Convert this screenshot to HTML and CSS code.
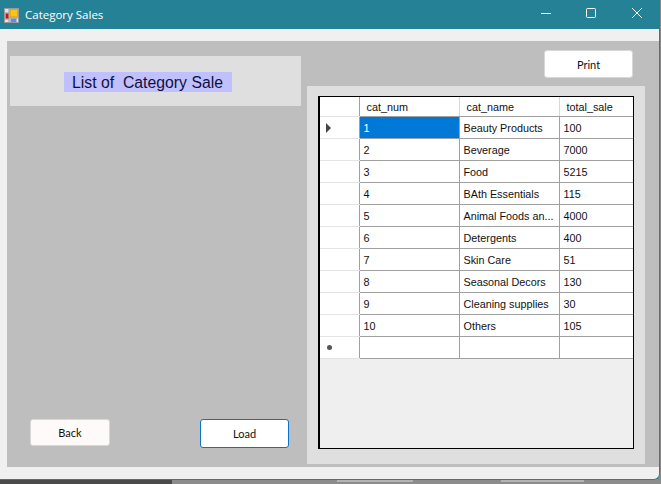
FILE: index.html
```html
<!DOCTYPE html>
<html lang="en">
<head>
    <meta charset="UTF-8">
    <title>Category Sales</title>
    <link rel="stylesheet" href="styles.css">
</head>
<body>
    <div class="window">
        <div class="titlebar">
            <svg class="app-icon" width="15" height="15" viewBox="0 0 15 15">
                <rect x="0.5" y="0.5" width="14" height="14" fill="#e4e4e4" stroke="#9a9a9a"/>
                <path d="M5 0v15M0 5h5M0 11h5M5 10h10" stroke="#9a9a9a" fill="none"/>
                <rect x="6" y="1.5" width="7.5" height="7.5" fill="#f5c518" stroke="#b98a10" stroke-width="0.6"/>
                <rect x="1.5" y="5.5" width="3" height="5" fill="#c01818"/>
                <rect x="6.5" y="10.5" width="6" height="3.5" fill="#5c8ee6"/>
            </svg>
            <span class="title">Category Sales</span>
            <div class="controls">
                <svg class="ctl" width="46" height="29" viewBox="0 0 46 29"><path d="M20 13.5h10" stroke="#fff" fill="none"/></svg>
                <svg class="ctl" width="46" height="29" viewBox="0 0 46 29"><rect x="19.5" y="8.5" width="9" height="9" rx="1" stroke="#fff" fill="none"/></svg>
                <svg class="ctl" width="46" height="29" viewBox="0 0 46 29"><path d="M19 8l10 10M29 8l-10 10" stroke="#fff" fill="none"/></svg>
            </div>
        </div>
        <div class="form-body">
            <div class="main-panel">
                <div class="left-col">
                    <div class="heading-box"><span class="heading">List of&nbsp; Category Sale</span></div>
                    <div class="left-buttons">
                        <button class="btn btn-back">Back</button>
                        <button class="btn btn-load">Load</button>
                    </div>
                </div>
                <div class="right-col">
                    <div class="print-row"><button class="btn btn-print">Print</button></div>
                    <div class="grid-panel">
                        <div class="grid-view">
                            <table class="data-grid">
                                <thead>
                                    <tr>
                                        <th class="row-head"></th>
                                        <th class="col-num">cat_num</th>
                                        <th class="col-name">cat_name</th>
                                        <th class="col-total">total_sale</th>
                                    </tr>
                                </thead>
                                <tbody>
                                    <tr><td class="row-head"><span class="arrow"></span></td><td class="selected">1</td><td>Beauty Products</td><td>100</td></tr>
                                    <tr><td class="row-head"></td><td>2</td><td>Beverage</td><td>7000</td></tr>
                                    <tr><td class="row-head"></td><td>3</td><td>Food</td><td>5215</td></tr>
                                    <tr><td class="row-head"></td><td>4</td><td>BAth Essentials</td><td>115</td></tr>
                                    <tr><td class="row-head"></td><td>5</td><td>Animal Foods an...</td><td>4000</td></tr>
                                    <tr><td class="row-head"></td><td>6</td><td>Detergents</td><td>400</td></tr>
                                    <tr><td class="row-head"></td><td>7</td><td>Skin Care</td><td>51</td></tr>
                                    <tr><td class="row-head"></td><td>8</td><td>Seasonal Decors</td><td>130</td></tr>
                                    <tr><td class="row-head"></td><td>9</td><td>Cleaning supplies</td><td>30</td></tr>
                                    <tr><td class="row-head"></td><td>10</td><td>Others</td><td>105</td></tr>
                                    <tr><td class="row-head"><span class="star"></span></td><td></td><td></td><td></td></tr>
                                </tbody>
                            </table>
                        </div>
                    </div>
                </div>
            </div>
        </div>
    </div>
    <div class="taskbar">
        <div class="task-dark"></div>
        <div class="task-light">
            <div class="task-pill pill-a"></div>
            <div class="task-pill pill-b"></div>
        </div>
    </div>
</body>
</html>
```

FILE: styles.css
```css
html, body {
    margin: 0;
    padding: 0;
}
body {
    width: 661px;
    height: 484px;
    overflow: hidden;
    background-color: #8a8a8a;
    font-family: 'Liberation Sans', Arial, sans-serif;
    color: #111;
}
.window {
    width: 660px;
    height: 480px;
    box-sizing: border-box;
    background-color: #f0f0f0;
    border-right: 1px solid #258195;
    border-bottom: 1px solid #258195;
    border-bottom-right-radius: 6px;
    overflow: hidden;
}
.titlebar {
    height: 29px;
    background-color: #258195;
    display: flex;
    align-items: center;
    padding-left: 4px;
    color: #fff;
}
.app-icon {
    margin-top: 1px;
    margin-right: 6px;
}
.title {
    font-family: 'Open Sans', sans-serif;
    font-size: 11.5px;
}
.controls {
    margin-left: auto;
    display: flex;
}
.form-body {
    padding: 12px 0 0 7px;
}
.main-panel {
    height: 426px;
    box-sizing: border-box;
    background-color: #bebebe;
    padding: 15px 0 3px 3px;
    display: flex;
    gap: 6px;
}
.left-col {
    width: 291px;
    display: flex;
    flex-direction: column;
    justify-content: space-between;
}
.heading-box {
    height: 50px;
    box-sizing: border-box;
    background-color: #dfdfdf;
    padding: 16px 0 0 54px;
}
.heading {
    display: block;
    background-color: #c0c0ff;
    color: #10103a;
    font-size: 15.8px;
    line-height: 19px;
    height: 20px;
    width: 168px;
    padding: 1px 0 0 8px;
    box-sizing: border-box;
}
.left-buttons {
    display: flex;
    justify-content: space-between;
    align-items: flex-start;
    padding: 0 12px 16px 20px;
}
.btn {
    font-family: 'Lato', sans-serif;
    font-size: 11px;
    color: #111;
    background-color: #fff;
    border: 1px solid #d8d8d8;
    border-radius: 3px;
    padding: 0;
}
.btn-back {
    width: 80px;
    height: 27px;
    background-color: #fffafa;
}
.btn-load {
    width: 89px;
    height: 29px;
    border-color: #0a72c8;
}
.right-col {
    width: 338px;
    display: flex;
    flex-direction: column;
}
.print-row {
    height: 30px;
    display: flex;
    justify-content: flex-end;
    margin-top: -6px;
    padding-right: 12px;
}
.btn-print {
    width: 89px;
    height: 28px;
}
.grid-panel {
    margin-top: 6px;
    height: 378px;
    box-sizing: border-box;
    background-color: #dfdfdf;
    padding: 10px 11px 15px 11px;
}
.grid-view {
    height: 353px;
    box-sizing: border-box;
    border-style: solid;
    border-color: #000;
    border-width: 1px 1px 1px 2px;
    background-color: #efefef;
}
.data-grid {
    border-collapse: collapse;
    table-layout: fixed;
    width: 313px;
    font-size: 10.8px;
    background-color: #fff;
}
.data-grid th,
.data-grid td {
    height: 22px;
    padding: 1px 0 0 4px;
    box-sizing: border-box;
    border: 1px solid #a0a0a0;
    text-align: left;
    font-weight: normal;
    white-space: nowrap;
    overflow: hidden;
}
.data-grid tr > :first-child {
    border-left: none;
}
.data-grid tr > :last-child {
    border-right: none;
}
.data-grid thead tr > * {
    border-top: none;
    height: 19px;
    padding-left: 7px;
    border-color: #d8d8d8;
    border-bottom-color: #a0a0a0;
}
.data-grid .row-head {
    width: 39px;
    padding-left: 6px;
    border-top-color: #e4e4e4;
    border-bottom-color: #e4e4e4;
    border-right-color: #a0a0a0;
}
.col-num,
.col-name {
    width: 100px;
}
.data-grid .selected {
    background-color: #0078d7;
    color: #fff;
}
.arrow {
    display: block;
    width: 0;
    height: 0;
    border-left: 5px solid #444;
    border-top: 5px solid transparent;
    border-bottom: 5px solid transparent;
}
.star {
    display: block;
    width: 5px;
    height: 5px;
    border-radius: 50%;
    background-color: #555;
    margin-left: 1px;
}
.taskbar {
    height: 4px;
    display: flex;
}
.task-dark {
    width: 172px;
    background-color: #4a4a4a;
}
.task-light {
    flex: 1;
    display: flex;
    background-color: #8c8c8c;
}
.task-pill {
    height: 2px;
    background-color: #b4b4b4;
}
.pill-a {
    width: 76px;
    margin-left: 165px;
}
.pill-b {
    width: 83px;
    margin-left: 88px;
}
```
